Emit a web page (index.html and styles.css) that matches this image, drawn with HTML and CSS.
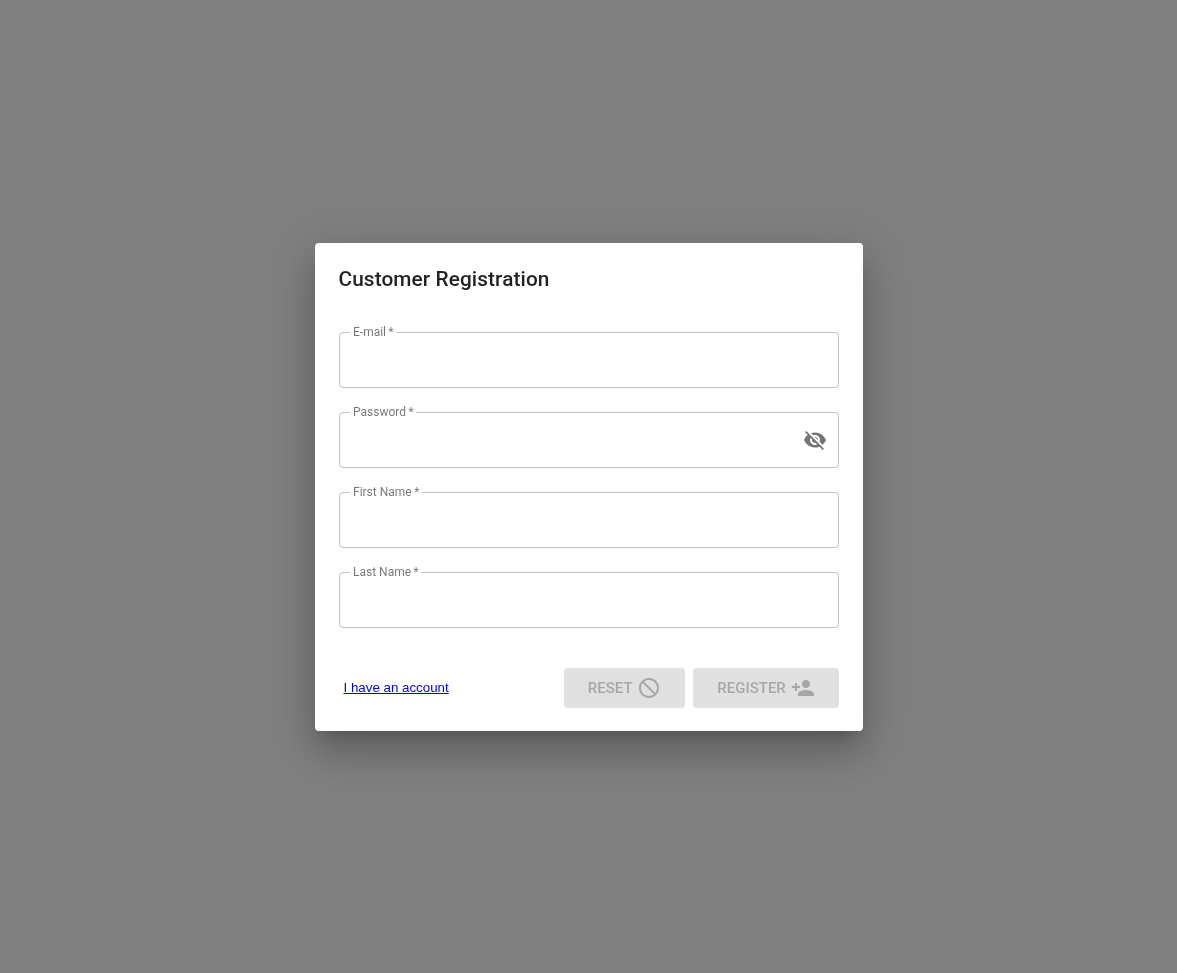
FILE: index.html
```html
<!DOCTYPE html>
<html lang="en">
<head>
<meta charset="utf-8">
<title>Customer Registration</title>
<link rel="stylesheet" href="styles.css">
</head>
<body>
<main class="dialog" role="dialog" aria-labelledby="title">
  <h2 class="title" id="title">Customer Registration</h2>
  <form class="form">
    <fieldset class="field">
      <legend class="label"><label for="email">E-mail&thinsp;*</label></legend>
      <div class="control"><input class="input" id="email" type="email" required></div>
    </fieldset>
    <fieldset class="field">
      <legend class="label"><label for="password">Password&thinsp;*</label></legend>
      <div class="control">
        <input class="input" id="password" type="password" required>
        <button class="eye" type="button" aria-label="Show password">
          <svg class="icon" viewBox="0 0 24 24"><path d="M12 7c2.76 0 5 2.24 5 5 0 .65-.13 1.26-.36 1.83l2.92 2.92c1.51-1.26 2.7-2.89 3.43-4.75-1.73-4.39-6-7.5-11-7.5-1.4 0-2.74.25-3.98.7l2.16 2.16C10.74 7.13 11.35 7 12 7zM2 4.27l2.28 2.28.46.46C3.08 8.3 1.78 10.02 1 12c1.73 4.39 6 7.5 11 7.5 1.55 0 3.03-.3 4.38-.84l.42.42L19.73 22 21 20.73 3.27 3 2 4.27zM7.53 9.8l1.55 1.55c-.05.21-.08.43-.08.65 0 1.66 1.34 3 3 3 .22 0 .44-.03.65-.08l1.55 1.55c-.67.33-1.41.53-2.2.53-2.76 0-5-2.24-5-5 0-.79.2-1.53.53-2.2zm4.31-.78l3.15 3.15.02-.16c0-1.66-1.34-3-3-3l-.17.01z"/></svg>
        </button>
      </div>
    </fieldset>
    <fieldset class="field">
      <legend class="label"><label for="first">First Name&thinsp;*</label></legend>
      <div class="control"><input class="input" id="first" type="text" required></div>
    </fieldset>
    <fieldset class="field">
      <legend class="label"><label for="last">Last Name&thinsp;*</label></legend>
      <div class="control"><input class="input" id="last" type="text" required></div>
    </fieldset>
    <div class="actions">
      <a class="link" href="#">I have an account</a>
      <div class="buttons">
        <button class="btn" type="reset" disabled>RESET
          <svg class="icon" viewBox="0 0 24 24"><path d="M12 2C6.48 2 2 6.48 2 12s4.48 10 10 10 10-4.48 10-10S17.52 2 12 2zm0 18c-4.42 0-8-3.58-8-8 0-1.85.63-3.55 1.69-4.9L16.9 18.31C15.55 19.37 13.85 20 12 20zm6.31-3.1L7.1 5.69C8.45 4.63 10.15 4 12 4c4.42 0 8 3.58 8 8 0 1.85-.63 3.55-1.69 4.9z"/></svg>
        </button>
        <button class="btn" type="submit" disabled>REGISTER
          <svg class="icon" viewBox="0 0 24 24"><path d="M15 12c2.21 0 4-1.79 4-4s-1.79-4-4-4-4 1.79-4 4 1.79 4 4 4zm-9-2V7H4v3H1v2h3v3h2v-3h3v-2H6zm9 4c-2.67 0-8 1.34-8 4v2h16v-2c0-2.66-5.33-4-8-4z"/></svg>
        </button>
      </div>
    </div>
  </form>
</main>
</body>
</html>
```
FILE: styles.css
```css
* {
  box-sizing: border-box;
}

html,
body {
  height: 100%;
}

body {
  margin: 0;
  background: #808080;
  display: flex;
  align-items: center;
  justify-content: center;
  font-family: Roboto, "Liberation Sans", sans-serif;
}

.dialog {
  width: 548px;
  height: 488px;
  padding: 20px 24px 23px;
  background: #fff;
  border-radius: 4px;
  box-shadow: 0 11px 15px -7px rgba(0, 0, 0, 0.2), 0 24px 38px 3px rgba(0, 0, 0, 0.14), 0 9px 46px 8px rgba(0, 0, 0, 0.12);
  will-change: opacity;
}

.title {
  margin: 0 0 30px;
  font-size: 20.8px;
  font-weight: 500;
  line-height: 32px;
  letter-spacing: 0.1px;
  color: rgba(0, 0, 0, 0.87);
}

.form {
  display: flex;
  flex-direction: column;
  gap: 17px;
}

.field {
  height: 63px;
  margin: 0;
  padding: 0;
  border: 1px solid rgba(0, 0, 0, 0.23);
  border-radius: 4px;
  min-width: 0;
}

.label {
  margin-left: 10.5px;
  padding: 0 2.5px 0 3px;
  font-size: 12px;
  line-height: 15px;
  color: rgba(0, 0, 0, 0.54);
}

.control {
  display: flex;
  align-items: center;
  height: 54px;
  margin-top: -7px;
  padding: 0 11px 0 14px;
}

.input {
  flex: 1;
  min-width: 0;
  height: 100%;
  padding: 0;
  border: 0;
  outline: 0;
  background: transparent;
  font: 400 16px Roboto, sans-serif;
}

.eye {
  display: flex;
  padding: 0;
  border: 0;
  background: transparent;
  color: rgba(0, 0, 0, 0.54);
}

.icon {
  width: 24px;
  height: 24px;
  fill: currentColor;
  flex: none;
}

.actions {
  display: flex;
  align-items: center;
  justify-content: space-between;
  margin-top: 23px;
  padding-left: 5px;
}

.link {
  font-family: "Liberation Sans", Arial, sans-serif;
  font-size: 13.333px;
  color: #0000ee;
}

.buttons {
  display: flex;
  gap: 8px;
}

.btn {
  display: flex;
  align-items: center;
  gap: 4.7px;
  height: 40px;
  padding: 0 24px;
  border: 0;
  border-radius: 4px;
  background: rgba(0, 0, 0, 0.12);
  color: rgba(0, 0, 0, 0.26);
  font: 500 15px/26px Roboto, sans-serif;
}
```
